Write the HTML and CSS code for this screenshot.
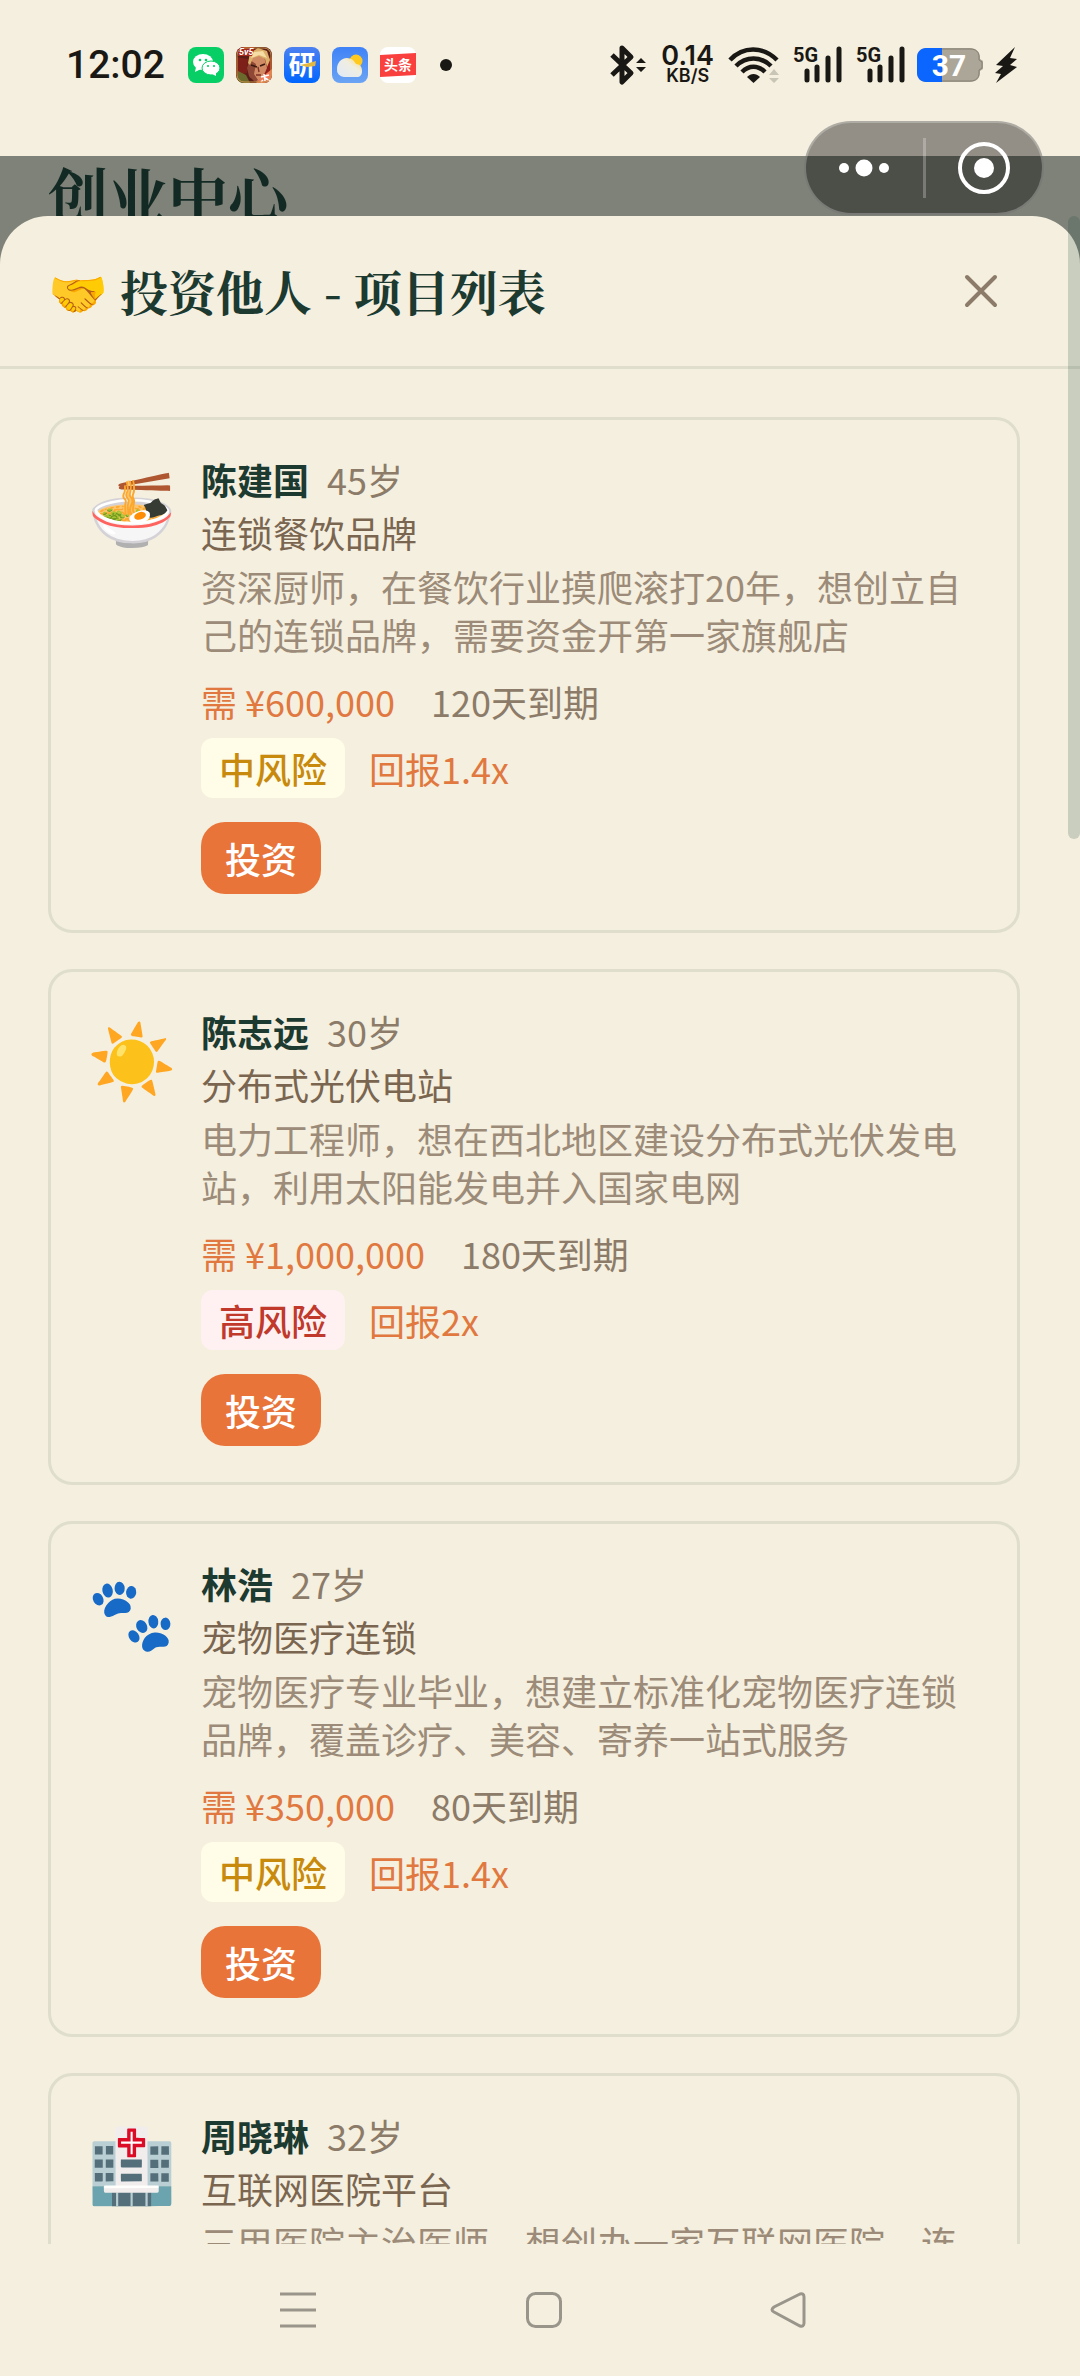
FILE: index.html
```html
<!DOCTYPE html>
<html lang="zh-CN">

<head>
    <meta charset="utf-8">
    <meta name="viewport" content="width=device-width, initial-scale=1">
    <title>创业中心</title>
    <link rel="stylesheet" href="styles.css">
</head>

<body>
    <header class="status-bar">
        <span class="time">12:02</span>
        <div class="apps">
            <svg class="app" viewBox="0 0 36 36">
                <rect width="36" height="36" rx="8" fill="#07cf66" />
                <ellipse cx="15" cy="15" rx="10" ry="8" fill="#fff" />
                <path d="M8 20l-1 5 6-3z" fill="#fff" />
                <ellipse cx="23" cy="21" rx="9" ry="7" fill="#fff" stroke="#07cf66" stroke-width="1" />
                <path d="M24 27l4 2v-4z" fill="#fff" />
                <g fill="#07cf66">
                    <circle cx="12" cy="13" r="1.3" />
                    <circle cx="18" cy="13" r="1.3" />
                    <circle cx="20" cy="19" r="1.1" />
                    <circle cx="26" cy="19" r="1.1" />
                </g>
            </svg>
            <svg class="app" viewBox="0 0 36 36">
                <clipPath id="hero"><rect width="36" height="36" rx="8" /></clipPath>
                <g clip-path="url(#hero)">
                    <rect width="36" height="36" fill="#5a1d18" />
                    <path d="M0 10l12 2-1 14-11 3z" fill="#7c2019" />
                    <path d="M28 14l8-4v18l-8 2z" fill="#8e1f1b" />
                    <path d="M0 36l2-12 8 4 4 8z" fill="#6b6a2c" />
                    <path d="M14 9l14 0 3 12-4 9-6 5-7-5-2-9z" fill="#d08a64" />
                    <path d="M14 13l6 4-2 10 4 6-3 2-6-6-2-8z" fill="#8f4836" />
                    <path d="M12 16l2-10 8-5 9 3 3 9-3 7-2-8-6-3-6 2-3 7z" fill="#dcb06a" />
                    <path d="M18 5l9-1 4 7-8-3-8 3z" fill="#f5dda5" />
                    <path d="M15 18l6 2M24 19l5-2" stroke="#3d1a14" stroke-width="1.8" />
                    <path d="M22 20l1 5M20 28h5" stroke="#7d3024" stroke-width="1.4" />
                    <path d="M36 22v14H20l6-6z" fill="#ef7a58" />
                    <path d="M28 27l1 7M25 30l8-2M29 31l5 3M27 33l-2 2" stroke="#fff" stroke-width="1.5" />
                    <path d="M0 0h19l-3 9H2z" fill="#a32a1c" />
                    <rect x="1" y="1" width="34" height="34" rx="7" fill="none" stroke="#c99548" />
                </g>
                <text class="hero-text" x="3" y="8">5v5</text>
            </svg>
            <svg class="app" viewBox="0 0 36 36">
                <defs>
                    <linearGradient id="blue" x2="0" y2="1">
                        <stop stop-color="#4c80f0" />
                        <stop offset="1" stop-color="#0066ff" />
                    </linearGradient>
                </defs>
                <rect width="36" height="36" rx="8" fill="url(#blue)" />
                <text class="yan-text" x="18" y="28">研</text>
                <path d="M16 18l9-2 7-2-1 5-8 1z" fill="#e4b83e" />
            </svg>
            <svg class="app" viewBox="0 0 36 36">
                <defs>
                    <linearGradient id="sky" x2="0" y2="1">
                        <stop stop-color="#3f82f7" />
                        <stop offset="1" stop-color="#6ba4f4" />
                    </linearGradient>
                    <linearGradient id="cloud" x1="1" x2="0" y2="1">
                        <stop stop-color="#ffd75e" />
                        <stop offset=".4" stop-color="#f0eee2" />
                        <stop offset="1" stop-color="#dfe9f7" />
                    </linearGradient>
                </defs>
                <rect width="36" height="36" rx="8" fill="url(#sky)" />
                <circle cx="24" cy="14" r="6.500" fill="#ffc91f" />
                <path d="M12 30a7 7 0 0 1-7-8c0-6 4-11 10-11 4 0 7 2 9 6 4 0 6 3 6 7 0 4-2 6-5 6z" fill="url(#cloud)" />
            </svg>
            <svg class="app" viewBox="0 0 36 36">
                <rect width="36" height="36" rx="8" fill="#fff" />
                <path d="M0 8l36-2v22L0 30z" fill="#f9403f" />
                <text class="news-text" x="18" y="23">头条</text>
            </svg>
        </div>
        <span class="more-dot"></span>

        <div class="signals">
            <svg class="bluetooth" viewBox="0 0 36 38">
                <path d="M2 9l19 18-9 9V2l9 9L2 29" fill="none" stroke="#1a1814" stroke-width="5" stroke-linejoin="round" />
                <path d="M26 17l5-5 5 5zM26 21l5 5 5-5z" fill="#1a1814" />
            </svg>
            <div class="speed">
                <span class="speed-value">0.14</span>
                <span class="speed-unit">KB/S</span>
            </div>
            <svg class="wifi" viewBox="0 0 50 36">
                <g fill="none" stroke="#1a1814" stroke-width="4.500">
                    <path d="M1 13C14-1 34-1 48 13" />
                    <path d="M7 19C17 9 32 9 42 19" />
                    <path d="M13 25C20 18 29 18 36 25" />
                </g>
                <path d="M18 30c4-4 9-4 13 0l-6.500 6z" fill="#1a1814" />
                <path d="M40 28l5-6 5 6zM40 31l5 5 5-5z" fill="#c8c4b6" />
            </svg>
            <svg class="cell" viewBox="0 0 48 38">
                <text class="cell-text" x="-1" y="16">5G</text>
                <path d="M13 25v9M23 21v13M34 12v22M45 3v31" stroke="#1a1814" stroke-width="5" stroke-linecap="round" />
            </svg>
            <svg class="cell" viewBox="0 0 48 38">
                <text class="cell-text" x="-1" y="16">5G</text>
                <path d="M13 25v9M23 21v13M34 12v22M45 3v31" stroke="#1a1814" stroke-width="5" stroke-linecap="round" />
            </svg>
            <svg class="battery" viewBox="0 0 66 34">
                <path d="M9 0h44c6 0 10 4 10 9v2l3 2v8l-3 2v2c0 5-4 9-10 9H9c-5 0-9-4-9-9V9c0-5 4-9 9-9z" fill="#aba698" />
                <path d="M9 0h16v34H9c-5 0-9-4-9-9V9c0-5 4-9 9-9z" fill="#0a66ff" />
                <path d="M25 1h28c6 0 9 3 9 8v3l3 2v6l-3 2v3c0 5-3 8-9 8H25" fill="none" stroke="#858071" />
                <text class="battery-text" x="32" y="28">37</text>
            </svg>
            <svg class="bolt" viewBox="0 0 22 36">
                <path d="M20 0L1 18l7 1-8 7 6 1-5 9 21-16-7-2 7-6-7-1z" fill="#1a1814" />
            </svg>
        </div>

        <div class="capsule">
            <button class="capsule-btn" aria-label="更多">
                <svg viewBox="0 0 52 52">
                    <g fill="#fff">
                        <circle cx="6" cy="26" r="5" />
                        <circle cx="26" cy="26" r="8.500" />
                        <circle cx="46" cy="26" r="5" />
                    </g>
                </svg>
            </button>
            <span class="capsule-line"></span>
            <button class="capsule-btn" aria-label="关闭小程序">
                <svg viewBox="0 0 52 52">
                    <circle cx="26" cy="26" r="24" fill="none" stroke="#fff" stroke-width="4" />
                    <circle cx="26" cy="26" r="10" fill="#fff" />
                </svg>
            </button>
        </div>
    </header>

    <main class="page">
        <h1 class="page-title">创业中心</h1>

        <section class="sheet">
            <div class="sheet-header">
                <h2 class="sheet-title">🤝 投资他人 - 项目列表</h2>
                <button class="close-btn" aria-label="关闭">
                    <svg viewBox="0 0 32 32">
                        <path d="M2 2l28 28M30 2L2 30" />
                    </svg>
                </button>
            </div>

            <div class="list">
                <article class="card">
                    <div class="card-icon">🍜</div>
                    <div class="card-body">
                        <div class="person"><strong>陈建国</strong><span>45岁</span></div>
                        <div class="project">连锁餐饮品牌</div>
                        <p class="desc">资深厨师，在餐饮行业摸爬滚打20年，想创立自己的连锁品牌，需要资金开第一家旗舰店</p>
                        <div class="need"><span class="amount">需 ¥600,000</span><span>120天到期</span></div>
                        <div class="risk"><span class="tag tag-mid">中风险</span><span>回报1.4x</span></div>
                        <button class="invest-btn">投资</button>
                    </div>
                </article>

                <article class="card">
                    <div class="card-icon">☀️</div>
                    <div class="card-body">
                        <div class="person"><strong>陈志远</strong><span>30岁</span></div>
                        <div class="project">分布式光伏电站</div>
                        <p class="desc">电力工程师，想在西北地区建设分布式光伏发电站，利用太阳能发电并入国家电网</p>
                        <div class="need"><span class="amount">需 ¥1,000,000</span><span>180天到期</span></div>
                        <div class="risk"><span class="tag tag-high">高风险</span><span>回报2x</span></div>
                        <button class="invest-btn">投资</button>
                    </div>
                </article>

                <article class="card">
                    <div class="card-icon">🐾</div>
                    <div class="card-body">
                        <div class="person"><strong>林浩</strong><span>27岁</span></div>
                        <div class="project">宠物医疗连锁</div>
                        <p class="desc">宠物医疗专业毕业，想建立标准化宠物医疗连锁品牌，覆盖诊疗、美容、寄养一站式服务</p>
                        <div class="need"><span class="amount">需 ¥350,000</span><span>80天到期</span></div>
                        <div class="risk"><span class="tag tag-mid">中风险</span><span>回报1.4x</span></div>
                        <button class="invest-btn">投资</button>
                    </div>
                </article>

                <article class="card">
                    <div class="card-icon">🏥</div>
                    <div class="card-body">
                        <div class="person"><strong>周晓琳</strong><span>32岁</span></div>
                        <div class="project">互联网医院平台</div>
                        <p class="desc">三甲医院主治医师，想创办一家互联网医院，连</p>
                    </div>
                </article>
            </div>
            <div class="scrollbar"></div>
        </section>
    </main>

    <nav class="nav-bar">
        <button class="nav-btn" aria-label="最近任务">
            <svg viewBox="0 0 36 36">
                <path d="M0 2h36M0 18h36M0 34h36" />
            </svg>
        </button>
        <button class="nav-btn" aria-label="主页">
            <svg viewBox="0 0 36 36">
                <rect x="1.500" y="1.500" width="33" height="33" rx="8" />
            </svg>
        </button>
        <button class="nav-btn" aria-label="返回">
            <svg viewBox="0 0 36 36">
                <path d="M28 2L2 15q-4 3 0 5l26 14q4 1 4-3V5q0-4-4-3z" />
            </svg>
        </button>
    </nav>
</body>

</html>
```

FILE: styles.css
```css
* {
    box-sizing: border-box;
}

body {
    margin: 0;
    height: 100vh;
    display: flex;
    flex-direction: column;
    overflow: hidden;
    background: #f5efdf;
    color: #8b7b68;
    font-family: "Noto Sans CJK SC", sans-serif;
    font-size: 36px;
    line-height: 48px;
}

button {
    padding: 0;
    border: none;
    background: none;
    font: inherit;
    cursor: pointer;
}

svg {
    display: block;
    overflow: visible;
}

/* status bar */
.status-bar {
    position: relative;
    flex: none;
    display: flex;
    align-items: center;
    height: 156px;
    padding: 0 63px 26px 66px;
    color: #1a1814;
    font-family: Roboto, sans-serif;
}

.time {
    width: 98px;
    font-size: 39px;
    font-weight: 500;
}

.apps {
    display: flex;
    gap: 12px;
    margin-left: 24px;
}

.app {
    width: 36px;
    height: 36px;
}

.hero-text {
    font: italic bold 9px Roboto, sans-serif;
    fill: #fff;
}

.yan-text {
    font: bold 27px "Noto Sans CJK SC", sans-serif;
    fill: #fff;
    text-anchor: middle;
}

.news-text {
    font: bold 14px "Noto Sans CJK SC", sans-serif;
    fill: #fff;
    text-anchor: middle;
}

.more-dot {
    width: 12px;
    height: 12px;
    margin-left: 24px;
    border-radius: 50%;
    background: #1a1814;
}

.signals {
    display: flex;
    align-items: center;
    gap: 12px;
    margin-left: auto;
}

.bluetooth {
    width: 36px;
    height: 38px;
}

.speed,
.wifi,
.cell {
    margin-left: 3px;
}

.speed {
    display: flex;
    flex-direction: column;
    align-items: center;
    font-family: Inter, sans-serif;
    font-weight: 600;
}

.speed-value {
    font-size: 27px;
    line-height: 22px;
}

.speed-unit {
    font-size: 18px;
    line-height: 18px;
}

.wifi {
    width: 50px;
    height: 36px;
}

.cell {
    width: 48px;
    height: 38px;
}

.cell-text {
    font: bold 20px Roboto, sans-serif;
    fill: #1a1814;
}

.battery {
    width: 66px;
    height: 34px;
}

.battery-text {
    font: bold 30px Roboto, sans-serif;
    fill: #fff;
    text-anchor: middle;
}

.bolt {
    width: 22px;
    height: 36px;
}

/* mini program capsule, floats over the page */
.capsule {
    position: absolute;
    top: 121px;
    right: 36px;
    z-index: 2;
    display: flex;
    align-items: center;
    width: 240px;
    height: 94px;
    border: 2px solid rgba(255, 255, 255, 0.25);
    border-radius: 47px;
    background: rgba(0, 0, 0, 0.4);
}

.capsule-btn {
    flex: 1;
    display: flex;
    justify-content: center;
}

.capsule-btn svg {
    width: 52px;
    height: 52px;
}

.capsule-line {
    width: 3px;
    height: 60px;
    background: rgba(255, 255, 255, 0.25);
}

/* page behind the sheet */
.page {
    flex: 1;
    min-height: 0;
    display: flex;
    flex-direction: column;
    background: #7f8278;
    overflow: hidden;
}

.page-title {
    flex: none;
    height: 60px;
    margin: 0;
    padding-left: 48px;
    overflow: hidden;
    color: #132a24;
    font-family: "Noto Serif CJK SC", "Noto Sans CJK SC", serif;
    font-size: 60px;
    line-height: 74px;
}

.sheet {
    position: relative;
    flex: 1;
    min-height: 0;
    display: flex;
    flex-direction: column;
    border-radius: 48px 48px 0 0;
    background: #f5efdf;
}

.sheet-header {
    display: flex;
    align-items: center;
    justify-content: space-between;
    padding: 36px 60px 36px 48px;
    border-bottom: 3px solid #dfddcc;
}

.sheet-title {
    margin: 0;
    color: #1c3a30;
    font-family: "Noto Serif CJK SC", "Noto Sans CJK SC", serif;
    font-size: 48px;
    line-height: 78px;
}

.close-btn {
    display: flex;
    align-items: center;
    justify-content: center;
    width: 78px;
    height: 78px;
}

.close-btn svg {
    width: 32px;
    height: 32px;
    fill: none;
    stroke: #8b7b68;
    stroke-width: 4;
    stroke-linecap: round;
}

.scrollbar {
    position: absolute;
    top: 0;
    right: 0;
    width: 12px;
    height: 30.7%;
    border-radius: 6px;
    background: rgba(28, 76, 60, 0.2);
}

/* project list */
.list {
    flex: 1;
    min-height: 0;
    display: flex;
    flex-direction: column;
    gap: 36px;
    padding: 48px 60px 0 48px;
    overflow: hidden;
}

.card {
    flex: none;
    display: flex;
    gap: 24px;
    min-height: 516px;
    padding: 36px;
    border: 3px solid #dfddcc;
    border-radius: 24px;
}

.card-icon {
    width: 90px;
    font-size: 72px;
    line-height: 96px;
}

.card-body {
    flex: 1;
}

.person,
.need {
    display: flex;
    line-height: 46px;
}

.person {
    gap: 18px;
}

.person strong {
    color: #1c3a30;
}

.project {
    margin-top: 6px;
    color: #7a6650;
}

.desc {
    margin: 6px 0 20px;
    color: #9b8b78;
}

.need {
    gap: 36px;
}

.amount {
    color: #e07840;
}

.risk {
    display: flex;
    align-items: center;
    gap: 24px;
    margin-top: 14px;
    color: #e07840;
}

.tag {
    padding: 6px 18px;
    border-radius: 12px;
    font-weight: 500;
}

.tag-mid {
    background: #fffce8;
    color: #c88a0c;
}

.tag-high {
    background: #fff1f2;
    color: #c0392b;
}

.invest-btn {
    margin-top: 24px;
    padding: 12px 24px;
    border-radius: 24px;
    background: #e8743a;
    color: #fff;
    font-weight: 500;
}

/* system navigation */
.nav-bar {
    flex: none;
    display: flex;
    align-items: center;
    justify-content: center;
    gap: 210px;
    height: 132px;
    padding-left: 8px;
}

.nav-btn svg {
    width: 36px;
    height: 36px;
    fill: none;
    stroke: #99958a;
    stroke-width: 3;
}
```
